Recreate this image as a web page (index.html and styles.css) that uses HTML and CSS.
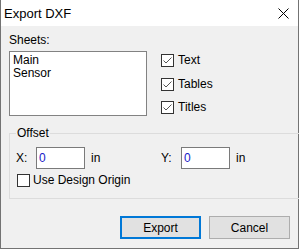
FILE: index.html
```html
<!DOCTYPE html>
<html lang="en">
<head>
    <meta charset="UTF-8">
    <title>Export DXF</title>
    <link rel="stylesheet" href="styles.css">
</head>
<body>
    <div class="window">
        <div class="titlebar">
            <span class="title">Export DXF</span>
            <svg class="close" width="11" height="11" viewBox="0 0 11 11">
                <path d="M0.5 0.5L10.5 10.5M10.5 0.5L0.5 10.5" stroke="#000" stroke-width="1"/>
            </svg>
        </div>

        <div class="content">
            <div class="top">
                <div class="sheets">
                    <div class="label">Sheets:</div>
                    <div class="listbox">
                        <div class="item">Main</div>
                        <div class="item">Sensor</div>
                    </div>
                </div>

                <div class="options">
                    <label class="check">
                        <span class="box"><svg width="11" height="11" viewBox="0 0 11 11"><path d="M1.5 5.5L4 8L9.5 2.5" fill="none" stroke="#555" stroke-width="1"/></svg></span>
                        Text
                    </label>
                    <label class="check">
                        <span class="box"><svg width="11" height="11" viewBox="0 0 11 11"><path d="M1.5 5.5L4 8L9.5 2.5" fill="none" stroke="#555" stroke-width="1"/></svg></span>
                        Tables
                    </label>
                    <label class="check">
                        <span class="box"><svg width="11" height="11" viewBox="0 0 11 11"><path d="M1.5 5.5L4 8L9.5 2.5" fill="none" stroke="#555" stroke-width="1"/></svg></span>
                        Titles
                    </label>
                </div>
            </div>

            <fieldset class="group">
                <legend>Offset</legend>
                <div class="offset-row">
                    <div class="coord">
                        <span class="axis">X:</span>
                        <span class="field">0</span>
                        <span class="unit">in</span>
                    </div>
                    <div class="coord">
                        <span class="axis">Y:</span>
                        <span class="field">0</span>
                        <span class="unit">in</span>
                    </div>
                </div>
                <label class="check origin">
                    <span class="box"></span>
                    Use Design Origin
                </label>
            </fieldset>

            <div class="buttons">
                <button class="btn default">Export</button>
                <button class="btn">Cancel</button>
            </div>
        </div>
    </div>
</body>
</html>
```

FILE: styles.css
```css
body {
    margin: 0;
    font-family: "Liberation Sans", Arial, sans-serif;
    font-size: 12px;
    color: #000;
}
.window {
    width: 299px;
    height: 249px;
    box-sizing: border-box;
    border: 1px solid #737373;
    border-top: none;
    display: flex;
    flex-direction: column;
    background-color: #f0f0f0;
}
.titlebar {
    height: 26px;
    background-color: #fff;
    display: flex;
    align-items: center;
    justify-content: space-between;
    padding-left: 3px;
    padding-right: 9px;
}
.title {
    font-size: 13px;
}
.content {
    flex: 1;
    padding: 8px 7px 0 8px;
}
.top {
    display: flex;
}
.label {
    line-height: 13px;
    margin-bottom: 4px;
}
.listbox {
    width: 138px;
    height: 65px;
    box-sizing: border-box;
    border: 1px solid #828282;
    background-color: #fff;
    padding: 2px 3px;
}
.item {
    line-height: 13px;
}
.options {
    margin-left: 14px;
    margin-top: 20px;
    display: flex;
    flex-direction: column;
    gap: 10.5px;
}
.check {
    display: flex;
    align-items: center;
    height: 13px;
    line-height: 13px;
}
.box {
    width: 13px;
    height: 13px;
    box-sizing: border-box;
    border: 1px solid #333;
    background-color: #fff;
    margin-right: 4px;
    display: flex;
}
.group {
    margin: 11px 0 0;
    padding: 0 6px 11px 6px;
    border: 1px solid #dcdcdc;
}
.group legend {
    padding: 0 1px;
    line-height: 13px;
}
.offset-row {
    display: flex;
    margin-top: 7px;
}
.coord {
    width: 145px;
    display: flex;
    align-items: center;
}
.axis {
    width: 20px;
}
.field {
    width: 49px;
    height: 22px;
    box-sizing: border-box;
    border: 1px solid #7a7a7a;
    background-color: #fff;
    padding-left: 2px;
    line-height: 20px;
    color: #2020c8;
}
.unit {
    margin-left: 6px;
}
.origin {
    margin-top: 5px;
    margin-left: 1px;
}
.origin .box {
    margin-right: 3px;
}
.buttons {
    display: flex;
    justify-content: flex-end;
    gap: 8px;
    margin-top: 17px;
    margin-right: 1px;
}
.btn {
    width: 81px;
    height: 23px;
    box-sizing: border-box;
    border: 1px solid #adadad;
    background-color: #e1e1e1;
    font-family: "Liberation Sans", Arial, sans-serif;
    font-size: 12px;
    color: #000;
    padding: 0;
}
.btn.default {
    border: 2px solid #0078d7;
}
```
